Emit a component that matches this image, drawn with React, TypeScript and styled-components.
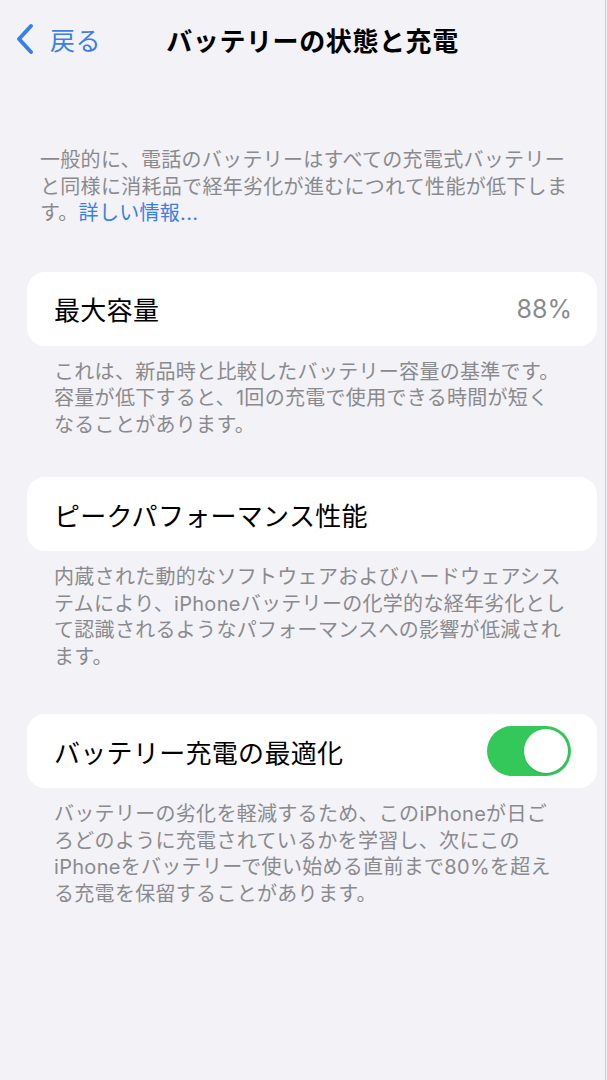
import styled, { createGlobalStyle } from 'styled-components';

const GlobalStyle = createGlobalStyle`
  html, body {
    margin: 0;
    padding: 0;
    background: #f2f2f7;
  }
  body {
    font-family: 'Inter', 'Noto Sans CJK JP', sans-serif;
    -webkit-font-smoothing: antialiased;
  }
`;

const Page = styled('div')`
  min-height: 1080px;
  width: 605px;
  border-right: 1px solid #cfcfd4;
  background: #f2f2f7;
`;

const NavBar = styled('div')`
  height: 78px;
  display: grid;
  grid-template-columns: 130px 1fr 110px;
  align-items: center;
`;

const BackButton = styled('div')`
  display: flex;
  align-items: center;
  gap: 14px;
  padding-left: 16px;
  color: #3a7fe6;
  font-size: 25px;
  letter-spacing: 0.5px;
`;

const NavTitle = styled('h1')`
  margin: 0;
  text-align: center;
  font-size: 26px;
  font-weight: 700;
  color: #000;
  letter-spacing: 0.6px;
  white-space: nowrap;
`;

const Note = styled('p')<{ $indent: number }>`
  margin: 0;
  padding-left: ${(p) => p.$indent}px;
  font-size: 20px;
  line-height: 26.5px;
  letter-spacing: 0.3px;
  color: #8a8a8e;
  white-space: nowrap;
`;

const Intro = styled(Note)`
  margin-top: 69px;
`;

const LinkText = styled('span')`
  color: #3a7fe6;
`;

const Section = styled('section')<{ $top: number }>`
  margin-top: ${(p) => p.$top}px;
`;

const Card = styled('div')`
  margin-left: 27px;
  width: 570px;
  height: 74px;
  box-sizing: border-box;
  padding: 0 26px 0 27px;
  background: #fff;
  border-radius: 18px;
  display: flex;
  align-items: center;
  justify-content: space-between;
`;

const Label = styled('span')`
  font-size: 26px;
  color: #000;
  letter-spacing: 0.3px;
`;

const Value = styled('span')`
  font-size: 25px;
  color: #8a8a8e;
  margin-right: -1px;
`;

const Footer = styled(Note)`
  margin-top: 13px;
`;

const Toggle = styled('div')<{ $on: boolean }>`
  width: 84px;
  height: 50px;
  border-radius: 25px;
  background: ${(p) => (p.$on ? '#34c759' : '#e9e9eb')};
  display: flex;
  align-items: center;
  justify-content: ${(p) => (p.$on ? 'flex-end' : 'flex-start')};
  padding: 0 3px;
  box-sizing: border-box;
`;

const Knob = styled('span')`
  width: 44px;
  height: 44px;
  border-radius: 50%;
  background: #fff;
  box-shadow: 0 1px 2px rgba(0, 0, 0, 0.1);
`;

const Chevron = () => (
  <svg width="20" height="32" viewBox="0 0 20 32" fill="none">
    <path
      d="M15 3 L3 16 L15 29"
      stroke="#3a7fe6"
      strokeWidth="4"
      strokeLinecap="round"
      strokeLinejoin="round"
    />
  </svg>
);

const App = () => {
  return (
    <Page>
      <GlobalStyle />
      <NavBar>
        <BackButton>
          <Chevron />
          <span>戻る</span>
        </BackButton>
        <NavTitle>バッテリーの状態と充電</NavTitle>
        <div />
      </NavBar>

      <Intro $indent={40}>
        一般的に、電話のバッテリーはすべての充電式バッテリー
        <br />
        と同様に消耗品で経年劣化が進むにつれて性能が低下しま
        <br />
        す。<LinkText>詳しい情報...</LinkText>
      </Intro>

      <Section $top={45}>
        <Card>
          <Label>最大容量</Label>
          <Value>88%</Value>
        </Card>
        <Footer $indent={54}>
          これは、新品時と比較したバッテリー容量の基準です。
          <br />
          容量が低下すると、1回の充電で使用できる時間が短く
          <br />
          なることがあります。
        </Footer>
      </Section>

      <Section $top={39}>
        <Card>
          <Label>ピークパフォーマンス性能</Label>
        </Card>
        <Footer $indent={54}>
          内蔵された動的なソフトウェアおよびハードウェアシス
          <br />
          テムにより、iPhoneバッテリーの化学的な経年劣化とし
          <br />
          て認識されるようなパフォーマンスへの影響が低減され
          <br />
          ます。
        </Footer>
      </Section>

      <Section $top={44}>
        <Card>
          <Label>バッテリー充電の最適化</Label>
          <Toggle $on>
            <Knob />
          </Toggle>
        </Card>
        <Footer $indent={54}>
          バッテリーの劣化を軽減するため、このiPhoneが日ご
          <br />
          ろどのように充電されているかを学習し、次にこの
          <br />
          iPhoneをバッテリーで使い始める直前まで80%を超え
          <br />
          る充電を保留することがあります。
        </Footer>
      </Section>
    </Page>
  );
};

export default App;
